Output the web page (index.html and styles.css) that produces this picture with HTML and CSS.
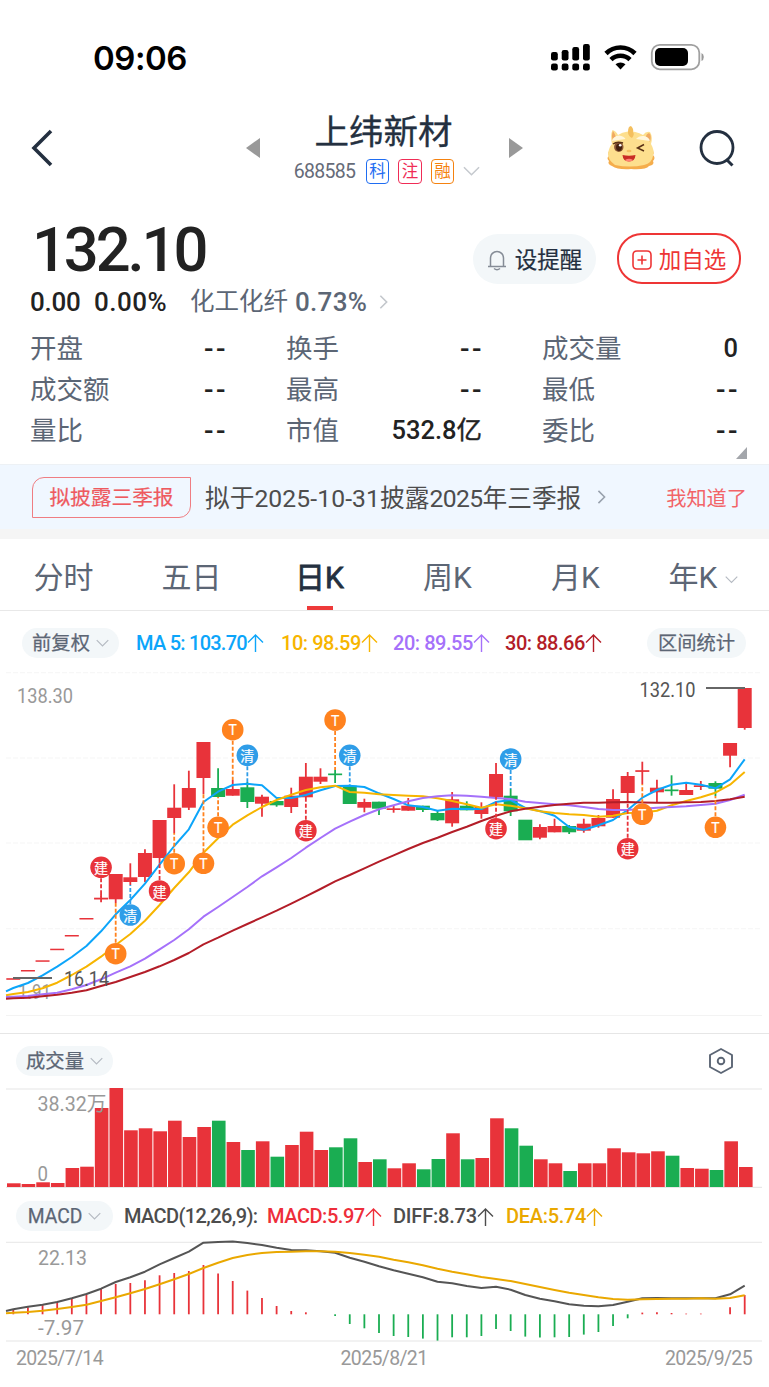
FILE: index.html
```html
<!DOCTYPE html>
<html lang="zh-CN">
<head>
    <meta charset="UTF-8">
    <title>上纬新材 688585</title>
    <link rel="stylesheet" href="styles.css">
</head>
<body>
    <svg width="0" height="0" class="defs">
        <symbol id="down" viewBox="0 0 18 10"><path d="M1 1l8 8 8-8" fill="none" stroke="currentColor" stroke-width="1.6"/></symbol>
        <symbol id="right" viewBox="0 0 10 16"><path d="M1.5 1l7 7-7 7" fill="none" stroke="currentColor" stroke-width="1.8"/></symbol>
        <symbol id="up" viewBox="0 0 17 19"><path d="M8.5 19V2M1 9.5L8.5 2 16 9.5" fill="none" stroke="currentColor" stroke-width="1.4"/></symbol>
    </svg>

    <div class="status-bar">
        <div class="time">09:06</div>
        <svg width="154" height="28" viewBox="551 43 154 28">
            <rect x="551" y="52" width="6.8" height="8.5" rx="2.2"/>
            <rect x="561.7" y="50" width="6.8" height="10.5" rx="2.2"/>
            <rect x="572.3" y="47" width="6.8" height="13.5" rx="2.2"/>
            <rect x="583" y="44" width="6.8" height="16.5" rx="2.2"/>
            <rect x="551" y="63.5" width="6.8" height="7" rx="2.2"/>
            <rect x="561.7" y="63.5" width="6.8" height="7" rx="2.2"/>
            <rect x="572.3" y="63.5" width="6.8" height="7" rx="2.2"/>
            <rect x="583" y="63.5" width="6.8" height="7" rx="2.2"/>
            <path d="M606 53.5a20.5 20.5 0 0 1 29 0M611 59.7a13.5 13.5 0 0 1 19 0" fill="none" stroke="#000" stroke-width="4.6"/>
            <path d="M615.5 64.3a7.5 7.5 0 0 1 10 0L620.5 69.6z"/>
            <rect x="651.8" y="44.8" width="47.5" height="24.5" rx="8" fill="none" stroke="#a0a0a0" stroke-width="1.8"/>
            <rect x="655" y="48" width="33" height="18" rx="5"/>
            <path d="M701.5 53v8q2.3-1 2.3-4t-2.3-4z" fill="#999"/>
        </svg>
    </div>

    <div class="header">
        <svg class="back" width="22" height="38" viewBox="0 0 22 38"><path d="M20 2L3 19 20 36" fill="none" stroke="#243040" stroke-width="3.6"/></svg>
        <svg class="prev" width="14" height="20"><path d="M0 10L14 0v20z" fill="#999"/></svg>
        <div class="stock">
            <h1>上纬新材</h1>
            <div class="stock-code">
                <span class="code">688585</span>
                <span class="tag blue">科</span>
                <span class="tag pink">注</span>
                <span class="tag orange">融</span>
                <svg class="chev" width="17" height="10"><use href="#down"/></svg>
            </div>
        </div>
        <svg class="next" width="14" height="20"><path d="M14 10L0 0v20z" fill="#999"/></svg>
        <svg class="mascot" width="50" height="46" viewBox="0 0 50 46">
            <path d="M4 25Q1 28 3 31 0 33 3 36 1 39 6 41 12 45 25 44 40 45 43 41 49 40 47 36 50 33 47 30 49 27 45 24z" fill="#f5ad4c"/>
            <path d="M6 19Q4 10 6.5 5 10 6 12 10 16 7 22 6.5 28 5.5 37 10 40 6 44 7 47 12 45 19 49 26 47 31 46 38 38 40 24 43 9 40 2 35 2 29 3 22 6 19z" fill="#fddf8e"/>
            <path d="M22 7Q22 1 25 1 28 4 27 7 29 9 26 13 22 11 22 7z" fill="#f4bf5e"/>
            <path d="M7 16Q5 10 7 6 9 9 10 12zM44 17Q46 10 43 8 40 9 40 12z" fill="#f0aa62"/>
            <path d="M6 16Q7 11 13 10.5 18 11 19.5 14 12 15 6 16zM30 14Q33 10.5 38 11 43 12 44 16 37 15 30 14z" fill="#fff6dc"/>
            <ellipse cx="12.8" cy="22" rx="4.7" ry="4.9" fill="#8a5534"/>
            <ellipse cx="13" cy="22.3" rx="3" ry="3.6" fill="#43200f"/>
            <circle cx="14.2" cy="20.3" r="1.3" fill="#fff"/>
            <path d="M7 19Q11 16 17 18M38 19.5L31.5 23 38 26" fill="none" stroke="#5a3216" stroke-width="1.5"/>
            <ellipse cx="23" cy="26" rx="2.5" ry="1.2" fill="#f5c163"/>
            <path d="M16.5 30Q23 31.5 29.5 30 29 36.5 23 36.5 17 36.5 16.5 30z" fill="#c92c25"/>
            <path d="M19 35Q23 32.5 27 35 25.5 36.5 23 36.5 20.5 36.5 19 35z" fill="#ff8273"/>
        </svg>
        <svg class="search" width="38" height="40" viewBox="0 0 38 40"><circle cx="19" cy="18.5" r="16" fill="none" stroke="#243040" stroke-width="2.8"/><path d="M28.5 30.5l6 6" stroke="#243040" stroke-width="3"/></svg>
    </div>

    <div class="quote">
        <div class="price">132.10</div>
        <div class="btn remind">
            <svg width="20" height="22" viewBox="0 0 20 22"><path d="M1 17.5h18M3.5 17V9a6.5 6.5 0 0 1 13 0v8M7 19.5q3 2.5 6 0" fill="none" stroke="#858c96" stroke-width="1.5"/></svg>
            <span>设提醒</span>
        </div>
        <div class="btn add">
            <svg width="20" height="20" viewBox="0 0 20 20"><path d="M5 1h10q4 0 4 4v10q0 4-4 4H5q-4 0-4-4V5q0-4 4-4zM10 5.5v9M5.5 10h9" fill="none" stroke="#ee3535" stroke-width="1.6"/></svg>
            <span>加自选</span>
        </div>
    </div>
    <div class="change">
        <span class="diff">0.00</span>
        <span class="pct">0.00%</span>
        <span class="sector">化工化纤</span>
        <span class="sector-pct">0.73%</span>
        <svg width="9" height="16"><use href="#right"/></svg>
    </div>

    <div class="stats">
        <div><label>开盘</label><b class="none">--</b></div>
        <div><label>换手</label><b class="none">--</b></div>
        <div><label>成交量</label><b>0</b></div>
        <div><label>成交额</label><b class="none">--</b></div>
        <div><label>最高</label><b class="none">--</b></div>
        <div><label>最低</label><b class="none">--</b></div>
        <div><label>量比</label><b class="none">--</b></div>
        <div><label>市值</label><b>532.8<span class="unit">亿</span></b></div>
        <div><label>委比</label><b class="none">--</b></div>
    </div>
    <div class="expand"><svg width="11" height="12"><path d="M11 0v12H0z" fill="#a3a6ab"/></svg></div>

    <div class="notice">
        <span class="notice-tag">拟披露三季报</span>
        <span class="notice-text">拟于<i class="date">2025-10-31</i>披露<i>2025</i>年三季报</span>
        <svg width="9" height="14"><use href="#right"/></svg>
        <span class="got-it">我知道了</span>
    </div>

    <div class="tabs">
        <div>分时</div>
        <div>五日</div>
        <div class="active">日K</div>
        <div>周K</div>
        <div>月K</div>
        <div>年K<svg width="13" height="9"><use href="#down"/></svg></div>
    </div>

    <div class="ma-row">
        <span class="pill">前复权<svg width="13" height="8"><use href="#down"/></svg></span>
        <span class="ma ma5">MA 5: 103.70<svg width="17" height="19"><use href="#up"/></svg></span>
        <span class="ma ma10">10: 98.59<svg width="17" height="19"><use href="#up"/></svg></span>
        <span class="ma ma20">20: 89.55<svg width="17" height="19"><use href="#up"/></svg></span>
        <span class="ma ma30">30: 88.66<svg width="17" height="19"><use href="#up"/></svg></span>
        <span class="pill range">区间统计</span>
    </div>

    <svg id="kline" class="chart" width="769" height="363" viewBox="0 670 769 363"></svg>

    <div class="sub-row volume-row">
        <span class="pill">成交量<svg width="13" height="8"><use href="#down"/></svg></span>
        <svg class="setting" width="26" height="28" viewBox="0 0 26 28"><path d="M13 2l11 6v12l-11 6-11-6V8z" fill="none" stroke="#5c6675" stroke-width="1.9" stroke-linejoin="round"/><circle cx="13" cy="14" r="3.3" fill="none" stroke="#5c6675" stroke-width="1.9"/></svg>
    </div>
    <svg id="volume" class="chart" width="769" height="101" viewBox="0 1087 769 101"></svg>

    <div class="sub-row macd-row">
        <span class="pill">MACD<svg width="13" height="8"><use href="#down"/></svg></span>
        <span class="m1">MACD(12,26,9):</span>
        <span class="m2">MACD:5.97<svg width="17" height="19"><use href="#up"/></svg></span>
        <span class="m3">DIFF:8.73<svg width="17" height="19"><use href="#up"/></svg></span>
        <span class="m4">DEA:5.74<svg width="17" height="19"><use href="#up"/></svg></span>
    </div>
    <svg id="macd" class="chart" width="769" height="101" viewBox="0 1241 769 101"></svg>

    <div class="dates">
        <span>2025/7/14</span>
        <span>2025/8/21</span>
        <span>2025/9/25</span>
    </div>

    <script>
        const RED = '#e8333a', GREEN = '#1aad52', GREY = '#999';
        const STEP = 14.628;
        const cx = i => 13.3 + STEP * i;

        // [color, body top, body bottom, high, low]
        const candles = [
            ['r',978.2,979.8],['r',970,971.5],['r',960.3,961.8],['r',948.7,950.2],['r',935,936.5],['r',918,919.5],
            ['r',897.7,899.5,894,902.3],['r',874,899.3,874,903],['r',877.3,882,863.3,885],['r',853,877,849.3,882],
            ['r',820,858,820,864],['r',807.7,818,784.3,833],['r',788,807.7,770.7,810],['r',742,778,742,794],
            ['g',788,797,768.3,797],['r',789,795.7,780,795.7],['g',787.3,802,782,808],['r',796.7,803.7,794.7,816.7],
            ['g',801,805.3,801,806.7],['r',795.7,807,787.7,813],['r',776.7,797.3,763,800],['r',776.7,781.7,768.3,784],
            ['g',773.5,775.2,769.7,783],['g',785.7,804],['r',802,807.7,798.7,812.3],['g',801.7,808.7,801.7,815],
            ['r',808.3,810,806,812.7],['r',805.7,810.7,798,810.7],['g',805.7,810,805.7,812],['g',813,820.3,810,821],
            ['r',799.3,823.3,792,826.7],['g',805.7,810.3,801.3,810.3],['r',807,814,802.3,818.7],['r',774,797.3,763,797.3],
            ['g',795.7,811.3,789,816],['g',819.7,840.3],['r',827,837.7,824.3,839.3],['r',826,832.3,818.7,832.3],
            ['g',826,832.3,825,834],['r',823.7,830.7,818.7,832.7],['r',818,826.3,815,827.7],['r',799,817.7,789.3,817.7],
            ['r',776,793,772,802],['r',770.2,771.9,761.7,784],['r',787.7,792.3,779.7,802.3],['g',789.5,791.2,775.3,795.7],
            ['r',790,795,783,795],['r',785.3,787,781,790],['g',783,788.7,781.3,796],['r',743,755.7,743,767.3],['r',688,728,688,729.7]
        ];

        // averages, first value sits on the left edge
        const ma5 = [991.3,988,983,975.3,966.7,957,946,931.3,914.3,900,883.7,864.7,846,829.3,802,791.7,785,783.7,785.3,798,798,795,790.3,786,785.7,787,793.3,799,805.3,807,810.7,808.7,809,809,802,800,808,811,815.7,827,829.7,825.3,820,810,797.7,790,784.7,782.7,784.7,788.3,779.3,759.3];
        const ma10 = [995.3,994,992,988.3,982.7,975,966.7,956.7,945,934,920.7,905,888,872.3,852.7,838.3,824.7,815.3,807,800,794.7,790,787.3,785.7,792,792.7,794.3,795,795.7,796.3,798.3,801,804.3,807.7,804.3,805.7,808.3,811.3,813,814.3,815,816.7,815.7,813,812.7,810.7,805.3,801,797.3,792.7,784.7,772];
        const ma20 = [997,996.7,996,994.3,992.7,989.3,985,979.3,972.7,966.3,958.7,949.3,940,929.3,916.7,907,897,887,876.3,867.3,858,847.7,838,828.7,821.7,815,809.3,805.3,801.3,798,796.3,795.3,795.7,796.7,798,799,801.7,803,804.3,805.3,807,809,810,810,808.7,807.7,807,806.3,805,803.7,800,794.7];
        const ma30 = [998.7,998.3,997.7,996.3,994.7,992.7,990.3,986,982,977,972,966.3,960,953,944.3,937.7,930.7,924,917.3,910.7,903.7,896.3,889,881.3,875,868.3,861.7,855.3,849,843,837.7,832,826.7,821,815.7,811.3,808.7,806.7,805,803.7,802.7,802.7,802.3,802,802.5,802.7,802.7,802.3,802,801,799.3,796.7];

        // [kind, candle, circle y, end of the dashed line]
        const marks = [
            ['建',6,867.3,897],['T',7,953.7,903],['清',8,915,885],['建',10,891,864],['T',11,863.7,833],['T',13,863.3,794],
            ['T',14,827.3,797],['T',15,729.7,780],['清',16,755.3,785],['建',20,830.7,800],['T',22,720,770],['清',23,755.3,785],
            ['建',33,828.7,797],['清',34,759,789],['建',42,848.7,802],['T',43,814.3,784],['T',48,827.3,796]
        ];
        const markColor = { '建': '#e8333a', 'T': '#ff821e', '清': '#2f9de8' };

        const volumes = [3.7,3,4.7,4,19,20.3,79,99,56.7,58.7,55.7,66.3,50,60,66.3,45,37,45.7,30.3,42,55.3,37,39.7,48.7,25,27.7,18.7,23.7,17.7,28,53.7,27.7,29,68.7,58.7,41.3,27.7,23.7,16,23.7,23.7,38.7,34.7,33.7,35.7,31.3,19,18.3,17,45.7,20];
        const greenVolumes = [14, 16, 18, 22, 23, 25, 28, 29, 31, 34, 35, 38, 45, 48];

        const bars = [4.3,7,9.7,12.7,15.7,20,25.3,30.3,31.3,34,39,41.3,43.3,49.3,40.7,33.3,23.7,16.3,8.3,3.3,2,0,-1.7,-9.7,-14,-18.7,-21.7,-22.7,-24.3,-26.3,-23,-23,-21.7,-14.7,-16.7,-22.3,-23.3,-23,-22.7,-20.3,-17.7,-11.7,-4,1.7,2,1.3,.7,.7,0,7,19.3];
        const diff = [1311,1309.3,1306.7,1304.7,1302,1298.3,1294,1288.7,1282,1277.3,1271.7,1264.3,1258,1251.7,1242.7,1242,1241.5,1243,1245,1247.7,1250,1250.3,1251.3,1252.7,1257.7,1261.7,1266.3,1270.3,1273.7,1277.3,1281.7,1283.3,1286,1288,1286.7,1289.7,1295,1298.7,1301.3,1304.3,1305.7,1306.3,1305,1301.7,1298.3,1298,1298.3,1298.3,1298.3,1298.3,1294.3,1285.7];
        const dea = [1313.3,1312.7,1312,1310.7,1309,1307,1304.7,1301,1297.3,1293.3,1289,1284.3,1279.3,1274,1268,1262.7,1258,1255,1253,1252,1251.7,1251.3,1251.3,1251.7,1253,1254.7,1256.7,1259.7,1262.3,1265.3,1268.7,1271.7,1274.3,1277,1279,1281,1284,1287,1290,1292.7,1295,1297.3,1299,1299.7,1299.3,1299,1298.7,1298.7,1298.3,1298.7,1298,1295.3];

        function line(x1, y1, x2, y2, color, w, extra = '') {
            return `<line x1="${x1}" y1="${y1}" x2="${x2}" y2="${y2}" stroke="${color}" stroke-width="${w}" ${extra}/>`;
        }

        function curve(data, color) {
            const pts = data.map((y, i) => `${i ? cx(i - 1) : 6},${y}`).join(' ');
            return `<polyline points="${pts}" fill="none" stroke="${color}" stroke-width="2" stroke-linejoin="round"/>`;
        }

        function label(x, y, w, text, color = GREY) {
            return `<text x="${x}" y="${y}" textLength="${w}" lengthAdjust="spacingAndGlyphs" fill="${color}" font-size="20">${text}</text>`;
        }

        function drawKline() {
            let s = '';
            [672.7, 758, 843, 928.7].forEach(y => s += line(6, y, 762, y, '#f5f5f5', 1, 'stroke-dasharray="5 2"'));
            s += line(6, 1015.5, 762, 1015.5, '#f3f3f3', 1);
            candles.forEach(([c, top, bottom, high, low], i) => {
                const color = c === 'r' ? RED : GREEN;
                if (high) s += line(cx(i), high, cx(i), low, color, 1.8);
                s += `<rect x="${cx(i) - 7}" y="${top}" width="14" height="${bottom - top}" fill="${color}"/>`;
            });
            s += label(17, 703, 56, '138.30') + label(18, 999, 33, '1.91');
            s += curve(ma5, '#0ca5fa') + curve(ma10, '#f7b500') + curve(ma20, '#a571fa') + curve(ma30, '#b31d28');
            s += line(13, 978, 52, 978, '#666', 2) + label(64, 986, 45, '16.14', '#555');
            s += line(706, 688, 745, 688, '#666', 2) + label(639.5, 696.5, 56, '132.10', '#555');
            marks.forEach(([t, i, y, end]) => {
                const edge = end > y ? y + 11 : y - 11;
                s += line(cx(i), edge, cx(i), end, markColor[t], 1.8, 'stroke-dasharray="4 2"');
                s += `<circle cx="${cx(i)}" cy="${y}" r="10.8" fill="${markColor[t]}"/>`;
                s += `<text x="${cx(i)}" y="${y + 5.5}" class="mark">${t}</text>`;
            });
            document.getElementById('kline').innerHTML = s;
        }

        function drawVolume() {
            let s = line(6, 1089, 762, 1089, '#e6e6e6', 1.2) + line(6, 1187.3, 762, 1187.3, '#e3e3e3', 1);
            volumes.forEach((h, i) => {
                const color = greenVolumes.includes(i) ? GREEN : RED;
                s += `<rect x="${7 + 14.64 * i}" y="${1187 - h}" width="13.6" height="${h}" fill="${color}"/>`;
            });
            s += label(37.5, 1111, 69, '38.32万') + label(37.5, 1181, 10.5, '0');
            document.getElementById('volume').innerHTML = s;
        }

        function drawMacd() {
            let s = line(6, 1242.3, 762, 1242.3, '#e6e6e6', 1) + line(6, 1341, 762, 1341, '#e6e6e6', 1.2);
            bars.forEach((h, i) => {
                if (h) s += line(cx(i), 1314.3, cx(i), 1314.3 - h, h > 0 ? RED : GREEN, 1.8);
            });
            s += label(38, 1265, 49, '22.13') + label(38, 1334.5, 46, '-7.97');
            s += curve(diff, '#555') + curve(dea, '#eaa800');
            document.getElementById('macd').innerHTML = s;
        }

        drawKline();
        drawVolume();
        drawMacd();
    </script>
</body>
</html>
```
FILE: styles.css
```css
* {
    box-sizing: border-box;
}

body {
    margin: 0;
    width: 769px;
    height: 1387px;
    overflow: hidden;
    background: #fff;
    color: #222;
    font-family: Roboto, "Noto Sans CJK SC", sans-serif;
}

svg {
    display: block;
    flex: none;
}

.defs {
    position: absolute;
}

span, label, b, .btn, .tabs div {
    white-space: nowrap;
    line-height: 1;
}

.status-bar {
    height: 100px;
    padding: 14px 64px 0 93px;
    display: flex;
    align-items: center;
    justify-content: space-between;
}

.time {
    font: 600 33px/1 Inter, sans-serif;
    letter-spacing: -.5px;
    padding-top: 2px;
    color: #000;
}

/* header */
.header {
    height: 97px;
    display: flex;
    align-items: center;
}

.back {
    margin: -1px 0 0 31px;
}

.prev {
    margin: -1px 0 0 193px;
}

.next {
    margin-top: -1px;
}

.stock {
    width: 221px;
    margin: 0 14px;
    display: flex;
    flex-direction: column;
    align-items: center;
}

h1 {
    margin: 0 2px 8px 0;
    font-size: 34.5px;
    font-weight: 400;
    line-height: 38px;
    color: #243040;
    -webkit-text-stroke: .3px #243040;
}

.stock-code {
    display: flex;
    align-items: center;
    height: 26px;
    margin-left: 5px;
}

.code {
    width: 63px;
    font-size: 19.5px;
    letter-spacing: -.7px;
    color: #666b78;
}

.tag {
    width: 23.5px;
    height: 25px;
    margin: -1px 0 0 9px;
    border: 1.8px solid;
    border-radius: 4px;
    font-size: 16.5px;
    line-height: 23px;
    text-align: center;
}

.blue { color: #1f6df2; }
.pink { color: #f02c56; }
.orange { color: #f5820f; }

.chev {
    margin: -2px 0 0 9px;
    color: #c5c9ce;
}

.mascot {
    margin: -2px 0 0 83px;
}

.search {
    margin-left: 42px;
}

/* price */
.quote {
    height: 90px;
    padding: 0 28px 0 32px;
    display: flex;
    align-items: center;
}

.price {
    flex: 1;
    font-size: 61.5px;
    font-weight: 500;
    line-height: 1;
    padding-top: 18px;
    letter-spacing: -3.1px;
}

.btn {
    width: 123px;
    height: 50px;
    margin-top: 33px;
    border-radius: 25px;
    display: flex;
    align-items: center;
    justify-content: center;
    gap: 7px;
    font-size: 22.5px;
}

.btn span {
    padding: 4px 0 0 1px;
}

.btn svg {
    margin-top: 2px;
}

.remind {
    background: #f3f7f9;
    color: #243040;
    -webkit-text-stroke: .2px #243040;
}

.add {
    width: 124px;
    height: 51px;
    margin-left: 21px;
    border: 2px solid #ee3535;
    color: #ee3535;
    gap: 6px;
}

.change {
    height: 30px;
    padding-left: 30px;
    display: flex;
    align-items: center;
    font-size: 26px;
    font-weight: 500;
}

.diff {
    width: 64px;
    letter-spacing: -.3px;
}

.pct {
    width: 96px;
    letter-spacing: .5px;
}

.sector {
    width: 105px;
    padding-top: 1px;
    font-size: 24.5px;
    font-weight: 400;
    color: #5c6675;
}

.sector-pct {
    width: 84px;
    letter-spacing: .3px;
    color: #5c6675;
}

.change svg {
    color: #c3c7cc;
}

.stats {
    margin-top: 11px;
    padding: 0 31px 0 30px;
    display: grid;
    grid-template-columns: repeat(3, 196px);
    column-gap: 60px;
    grid-auto-rows: 41px;
}

.stats div {
    display: flex;
    align-items: center;
    justify-content: space-between;
}

.stats label {
    padding-top: 2px;
    font-size: 26.5px;
    color: #5c6675;
}

.stats b {
    font-size: 25.5px;
    font-weight: 500;
}

.stats .unit {
    font-weight: 400;
    -webkit-text-stroke: .4px #222;
}

.stats .none {
    letter-spacing: 2.5px;
    font-size: 28px;
    margin-right: -2px;
}

.expand {
    height: 13px;
    margin: -4px 22px 0;
    display: flex;
    justify-content: flex-end;
}

/* notice */
.notice {
    height: 75px;
    margin-top: 4px;
    padding: 0 22px 8px 32px;
    border-top: 1px solid #edf1f5;
    border-bottom: 10px solid #f5f5f5;
    background: #f0f7ff;
    display: flex;
    align-items: center;
}

.notice-tag {
    width: 159px;
    height: 41px;
    margin-top: 8px;
    border: 1.5px solid #ef7d82;
    border-radius: 12px 0 12px 0;
    font-size: 20.7px;
    line-height: 41px;
    text-align: center;
    color: #ee5a5f;
    -webkit-text-stroke: .2px #ee5a5f;
}

.notice-text {
    width: 393px;
    padding: 12px 0 0 14px;
    font-size: 24.7px;
    color: #4d4d4d;
}

.notice-text i {
    font-style: normal;
    letter-spacing: -.6px;
}

.notice-text .date {
    letter-spacing: .1px;
}

.notice svg {
    margin: 8px 0 0 13px;
    color: #98a1ad;
}

.got-it {
    margin: 12px 0 0 auto;
    font-size: 20.2px;
    color: #f26468;
}

/* tabs */
.tabs {
    height: 72px;
    border-bottom: 1px solid #e8e8e8;
    display: flex;
}

.tabs div {
    width: 128px;
    padding: 6px 1px 0 0;
    display: flex;
    align-items: center;
    justify-content: center;
    font-size: 30px;
    color: #5c6675;
    position: relative;
}

.tabs .active {
    color: #243040;
    -webkit-text-stroke: .8px #243040;
}

.tabs .active::after {
    content: '';
    position: absolute;
    left: 51px;
    bottom: 0;
    width: 26px;
    height: 4px;
    background: #ee3a3a;
}

.tabs svg {
    margin: 3px 0 0 8px;
    color: #b5bac2;
}

/* indicators */
.ma-row {
    height: 59px;
    padding: 4px 23px 0 22px;
    display: flex;
    align-items: center;
    font-size: 20px;
    font-weight: 500;
}

.pill {
    width: 97px;
    height: 30px;
    padding-top: 2px;
    border-radius: 15px;
    background: #f3f7f9;
    color: #5c6675;
    font-size: 19.3px;
    font-weight: 400;
    -webkit-text-stroke: .25px #5c6675;
    display: flex;
    align-items: center;
    justify-content: center;
    flex: none;
}

.pill svg {
    margin: -2px 0 0 6px;
    color: #b5bac2;
}

.ma, .macd-row span {
    display: flex;
    align-items: center;
}

.ma { letter-spacing: -.45px; }
.ma5 { width: 145px; margin-left: 17px; letter-spacing: -.75px; color: #0ca5fa; }
.ma10 { width: 112px; color: #f7b500; }
.ma20 { width: 112px; color: #a571fa; }
.ma30 { color: #b31d28; }

.range {
    width: 99px;
    margin-left: auto;
}

.chart {
    overflow: visible;
}

.chart text {
    font-family: Roboto, "Noto Sans CJK SC", sans-serif;
}

.chart .mark {
    font-size: 14px;
    fill: #fff;
    stroke: #fff;
    stroke-width: .2px;
    text-anchor: middle;
}

.sub-row {
    height: 54px;
    padding: 0 35px 0 16px;
    display: flex;
    align-items: center;
}

.volume-row {
    border-top: 1px solid #e6e6e6;
    justify-content: space-between;
}

.macd-row {
    height: 53px;
    padding-top: 3px;
    font-size: 20px;
    font-weight: 500;
}

.macd-row .pill {
    justify-content: center;
}

.m1 { width: 143px; margin-left: 11px; letter-spacing: -.6px; color: #4d4d4d; }
.m2 { width: 126px; letter-spacing: -.45px; color: #ee2e3a; }
.m3 { width: 113px; letter-spacing: -.2px; color: #4d4d4d; }
.m4 { letter-spacing: -.3px; color: #eaa800; }

.dates {
    padding: 7px 17px 0 16px;
    display: flex;
    justify-content: space-between;
    font-size: 19.5px;
    letter-spacing: -.65px;
    color: #999;
}
```
